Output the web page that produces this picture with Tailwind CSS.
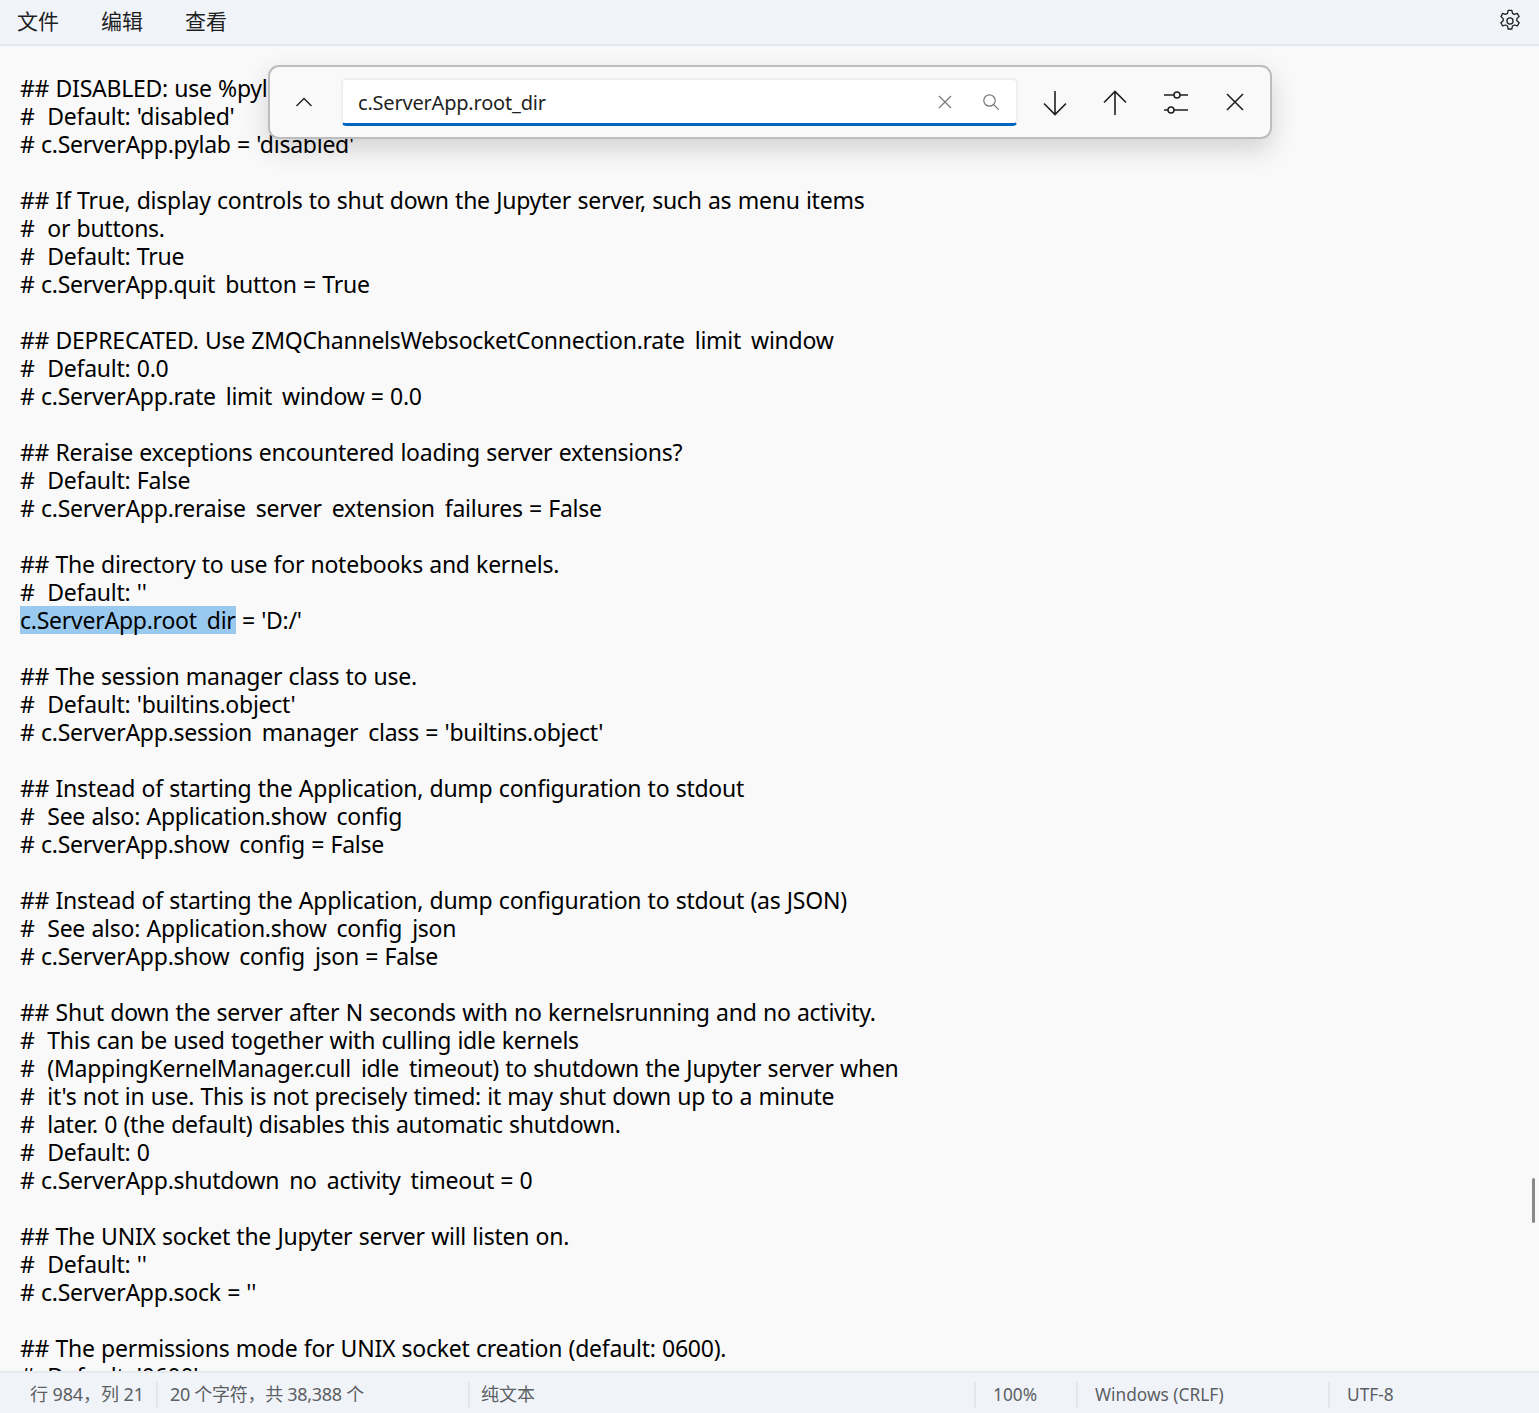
<!DOCTYPE html>
<html lang="zh-CN">
<head>
  <meta charset="UTF-8" />
  <meta name="viewport" content="width=device-width, initial-scale=1.0" />
  <title>jupyter_lab_config.py - 记事本</title>
  <script src="https://cdn.jsdelivr.net/npm/@tailwindcss/browser@4"></script>
</head>
<body class="h-[1413px] w-[1539px] overflow-hidden bg-[#f9f9f9] font-['Noto_Sans','Noto_Sans_CJK_SC',sans-serif]">
  <div class="relative flex h-full flex-col">

    <!-- menu bar -->
    <header class="flex h-[46px] shrink-0 items-center border-b-2 border-[#e5e9ef] bg-[#f0f4f9] pb-[2px] pl-[17px] pr-[16px] text-[21px] text-[#1f1f1f]">
      <nav class="flex gap-[42px] font-['Noto_Sans_CJK_SC',sans-serif]">
        <span>文件</span>
        <span>编辑</span>
        <span>查看</span>
      </nav>
      <svg class="ml-auto h-[26px] w-[26px] text-[#1f1f1f]" viewBox="0 0 24 24" fill="none" stroke="currentColor" stroke-width="1.2" stroke-linejoin="round">
        <path d="M10.3 2.2h3.4l.6 2.8 1.7.9 2.7-.9 1.7 2.9-2.1 1.9v1.9l2.1 2-1.7 2.9-2.7-.9-1.7.9-.6 2.8h-3.4l-.6-2.8-1.7-.9-2.7.9-1.7-2.9 2.1-2v-1.9l-2.1-1.9 1.7-2.9 2.7.9 1.700-.9z" />
        <circle cx="12" cy="12" r="2.8" />
      </svg>
    </header>

    <!-- text area -->
    <main class="min-h-0 flex-1 overflow-hidden pl-[20px] pt-[28px] text-[23px] leading-[28px] tracking-[-0.25px] text-black [word-spacing:0.6px]">
      <div class="whitespace-pre">## DISABLED: use %pylab or %matplotlib in the notebook to enable matplotlib.
#  Default: 'disabled'
# c.ServerApp.pylab = 'disabled'

## If True, display controls to shut down the Jupyter server, such as menu items
#  or buttons.
#  Default: True
# c.ServerApp.quit<span class="text-transparent">_</span>button = True

## DEPRECATED. Use ZMQChannelsWebsocketConnection.rate<span class="text-transparent">_</span>limit<span class="text-transparent">_</span>window
#  Default: 0.0
# c.ServerApp.rate<span class="text-transparent">_</span>limit<span class="text-transparent">_</span>window = 0.0

## Reraise exceptions encountered loading server extensions?
#  Default: False
# c.ServerApp.reraise<span class="text-transparent">_</span>server<span class="text-transparent">_</span>extension<span class="text-transparent">_</span>failures = False

## The directory to use for notebooks and kernels.
#  Default: ''
<span class="inline-block h-[28px] bg-[#99c9ef] align-top">c.ServerApp.root<span class="text-transparent">_</span>dir</span> = 'D:/'

## The session manager class to use.
#  Default: 'builtins.object'
# c.ServerApp.session<span class="text-transparent">_</span>manager<span class="text-transparent">_</span>class = 'builtins.object'

## Instead of starting the Application, dump configuration to stdout
#  See also: Application.show<span class="text-transparent">_</span>config
# c.ServerApp.show<span class="text-transparent">_</span>config = False

## Instead of starting the Application, dump configuration to stdout (as JSON)
#  See also: Application.show<span class="text-transparent">_</span>config<span class="text-transparent">_</span>json
# c.ServerApp.show<span class="text-transparent">_</span>config<span class="text-transparent">_</span>json = False

## Shut down the server after N seconds with no kernelsrunning and no activity.
#  This can be used together with culling idle kernels
#  (MappingKernelManager.cull<span class="text-transparent">_</span>idle<span class="text-transparent">_</span>timeout) to shutdown the Jupyter server when
#  it's not in use. This is not precisely timed: it may shut down up to a minute
#  later. 0 (the default) disables this automatic shutdown.
#  Default: 0
# c.ServerApp.shutdown<span class="text-transparent">_</span>no<span class="text-transparent">_</span>activity<span class="text-transparent">_</span>timeout = 0

## The UNIX socket the Jupyter server will listen on.
#  Default: ''
# c.ServerApp.sock = ''

## The permissions mode for UNIX socket creation (default: 0600).
#  Default: '0600'</div>
    </main>

    <!-- status bar -->
    <footer class="flex h-[42px] shrink-0 items-center border-t-2 border-[#e5e9ef] bg-[#f0f4f9] pt-[3px] text-[18px] text-[#5c5f63]">
      <div class="w-[156px] pl-[30px] tracking-[-0.1px]">行 984，列 21</div>
      <div class="flex h-[26px] w-[312px] items-center border-l-2 border-[#e3e6ea] pl-[12px] tracking-[-0.3px]">20 个字符，共 38,388 个</div>
      <div class="flex h-[26px] w-[506px] items-center border-l-2 border-[#e3e6ea] pl-[11px]">纯文本</div>
      <div class="flex h-[26px] w-[102px] items-center border-l-2 border-[#e3e6ea] pl-[17px] text-[17.3px]">100%</div>
      <div class="flex h-[26px] w-[252px] items-center border-l-2 border-[#e3e6ea] pl-[17px] text-[17.3px]">Windows (CRLF)</div>
      <div class="flex h-[26px] items-center border-l-2 border-[#e3e6ea] pl-[17px] text-[17.3px]">UTF-8</div>
    </footer>

    <!-- find panel -->
    <div class="absolute left-[268px] top-[65px] flex h-[74px] w-[1004px] items-center rounded-[11px] border-2 border-[#bdbdbd] bg-[#f9f9f9] pl-[24px] shadow-[0_10px_26px_rgba(0,0,0,0.16)]">
      <svg class="h-[20px] w-[20px] text-[#1f1f1f]" viewBox="0 0 20 20" fill="none" stroke="currentColor" stroke-width="1.4">
        <path d="M2.5 14 10 6.5 17.500 14" />
      </svg>
      <div class="ml-[27px] flex h-[48px] w-[677px] items-center rounded-[5px] border-2 border-b-[3px] border-[#efefef] border-b-[#0067c0] bg-white pl-[15px] pr-[16px] text-[#1f1f1f]">
        <span class="pt-[3px] text-[20px] tracking-[-0.2px]">c.ServerApp.root_dir</span>
        <svg class="ml-auto h-[16px] w-[16px] -translate-x-[1px] text-[#777777]" viewBox="0 0 16 16" fill="none" stroke="currentColor" stroke-width="1.2">
          <path d="M2 2 14 14M14 2 2 14" />
        </svg>
        <svg class="ml-[28px] h-[18px] w-[18px] text-[#777777]" viewBox="0 0 18 18" fill="none" stroke="currentColor" stroke-width="1.2">
          <circle cx="7.500" cy="7.500" r="5.700" />
          <path d="m11.700 11.700 5 5" />
        </svg>
      </div>
      <div class="ml-[23px] mt-[1px] flex items-center gap-[32px] text-[#1f1f1f]">
        <svg class="h-[28px] w-[28px]" viewBox="0 0 28 28" fill="none" stroke="currentColor" stroke-width="1.6">
          <path d="M14 2v23M3 14.500 14 25.500 25 14.500" />
        </svg>
        <svg class="h-[28px] w-[28px]" viewBox="0 0 28 28" fill="none" stroke="currentColor" stroke-width="1.6">
          <path d="M14 26V3M3 13.500 14 2.500 25 13.500" />
        </svg>
        <svg class="h-[28px] w-[28px] translate-x-[1px]" viewBox="0 0 28 28" fill="none" stroke="currentColor" stroke-width="1.5">
          <path d="M2 6h10M18 6h8M2 21h4M12 21h14" />
          <circle cx="15" cy="6" r="3" />
          <circle cx="9" cy="21" r="3" />
        </svg>
        <svg class="h-[28px] w-[28px] -translate-y-[1px]" viewBox="0 0 28 28" fill="none" stroke="currentColor" stroke-width="1.6">
          <path d="M6 6l16 16M22 6 6 22" />
        </svg>
      </div>
    </div>

    <!-- scrollbar thumb -->
    <div class="absolute left-[1532px] top-[1178px] h-[45px] w-[3px] rounded-full bg-[#8a8a8a]"></div>
  </div>
</body>
</html>
